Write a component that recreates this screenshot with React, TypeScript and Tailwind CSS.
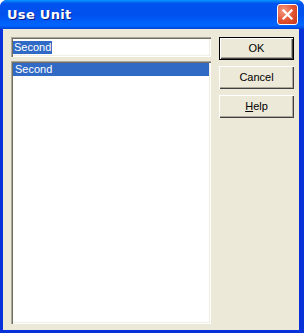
import React from 'react';

const font = { fontFamily: '"Liberation Sans", Arial, sans-serif' };

const XpButton: React.FC<{ label: React.ReactNode; isDefault?: boolean }> = ({ label, isDefault }) => (
  <div
    className={`h-[23px] w-[75px] flex items-center justify-center bg-[#ECE9D8] text-[11px] text-black ${
      isDefault ? 'border border-black' : ''
    }`}
  >
    <div className="w-full h-full flex items-center justify-center shadow-[inset_1px_1px_#ffffff,inset_-1px_-1px_#404040,inset_-2px_-2px_#ACA899]">
      {label}
    </div>
  </div>
);

export default function App() {
  return (
    <div
      className="w-[304px] h-[333px] flex flex-col bg-[#0831D9] rounded-t-[7px] overflow-hidden"
      style={font}
    >
      {/* title bar */}
      <div className="h-[29px] shrink-0 flex items-center justify-between pl-[7px] pr-[6px] bg-[linear-gradient(to_bottom,#0997FF_0%,#0053EE_12%,#0050EE_50%,#0066FF_88%,#0042D6_100%)]">
        <span
          className="text-white font-bold text-[13px] tracking-[0.3px] [text-shadow:1px_1px_#0A1883]"
          style={{ fontFamily: '"DejaVu Sans", "Liberation Sans", sans-serif' }}
        >
          Use Unit
        </span>
        <div className="w-[21px] h-[21px] rounded-[3px] border border-white flex items-center justify-center bg-[radial-gradient(circle_at_30%_30%,#F39C83_0%,#E2502E_55%,#C4391C_100%)]">
          <svg width="13" height="13" viewBox="0 0 13 13">
            <path d="M2.5 2.5 L10.5 10.5 M10.5 2.5 L2.5 10.5" stroke="#ffffff" strokeWidth="2.2" strokeLinecap="square" />
          </svg>
        </div>
      </div>

      {/* body */}
      <div className="flex-1 mx-[3px] mr-[5px] mb-[3px] bg-[#ECE9D8] flex gap-[8px] pl-[8px] pt-[8px] pb-[6px]">
        <div className="w-[200px] flex flex-col gap-[4px]">
          <div className="h-[20px] flex items-start bg-white shadow-[inset_1px_1px_#ACA899,inset_2px_2px_#716F64,inset_-1px_-1px_#ffffff,inset_-2px_-2px_#F1EFE2] pl-[2px] pt-[4px] text-[11px] leading-[13px]">
            <span className="bg-[#316AC5] text-white px-[1px]">Second</span>
          </div>
          <div className="flex-1 bg-white shadow-[inset_1px_1px_#ACA899,inset_2px_2px_#716F64,inset_-1px_-1px_#ffffff,inset_-2px_-2px_#F1EFE2] p-[2px]">
            <div className="h-[13px] bg-[#316AC5] text-white text-[11px] leading-[13px] pl-[2px]">Second</div>
          </div>
        </div>
        <div className="flex flex-col gap-[6px]">
          <XpButton label="OK" isDefault />
          <XpButton label="Cancel" />
          <XpButton
            label={
              <span>
                <span className="underline">H</span>elp
              </span>
            }
          />
        </div>
      </div>
    </div>
  );
}
